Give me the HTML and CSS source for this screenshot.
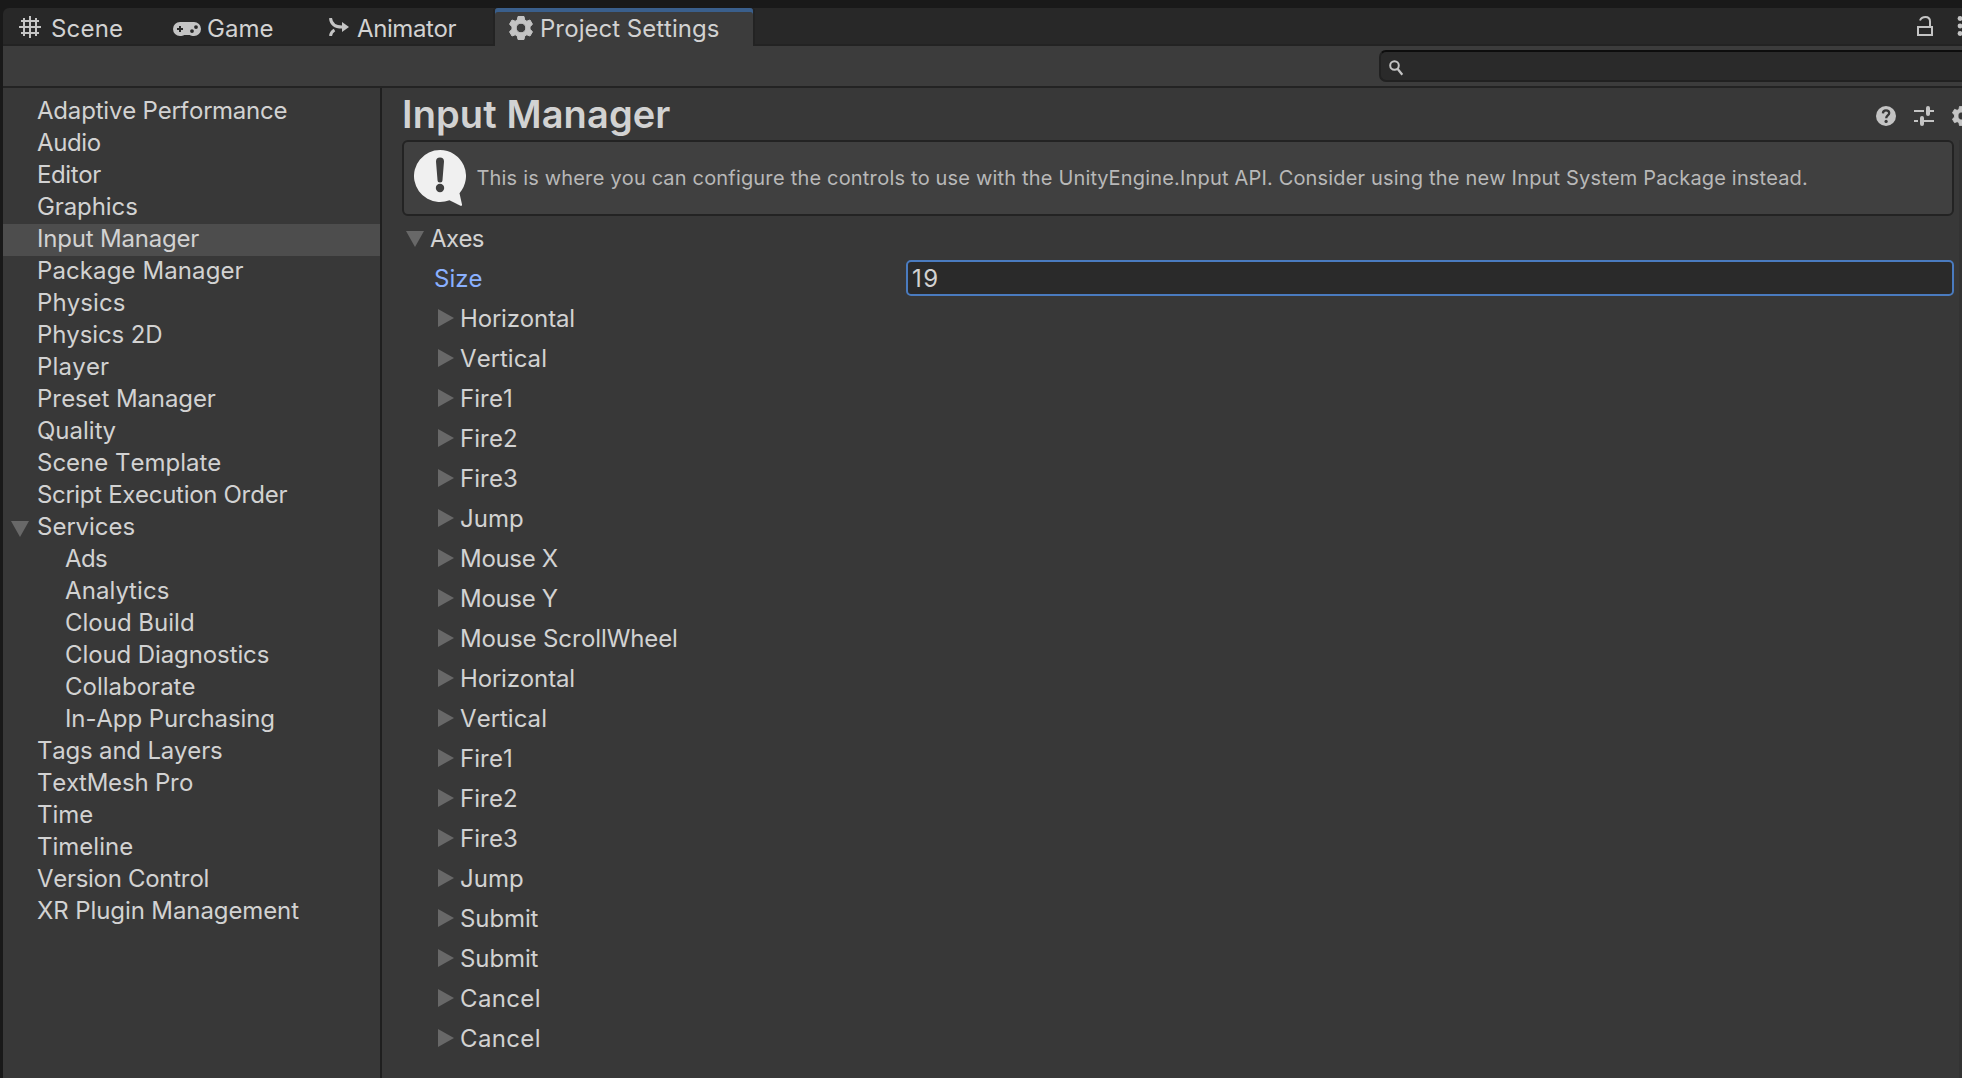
FILE: index.html
```html
<!DOCTYPE html>
<html lang="en">
<head>
<meta charset="utf-8">
<title>Project Settings</title>
<link rel="stylesheet" href="styles.css">
</head>
<body>
<svg class="defs" width="0" height="0" aria-hidden="true">
  <symbol id="gear" viewBox="0 0 24 24">
    <path stroke="currentColor" stroke-width="1" stroke-linejoin="round" fill-rule="evenodd" d="M9 0.500h6l.7 3.500 2.100 1.200 3.200-1.200 2.500 4.300-2.500 2.400v2.600l2.500 2.400-2.500 4.300-3.200-1.200-2.100 1.200-.7 3.500H9l-.7-3.500-2.100-1.200L3 20 .5 15.700 3 13.300v-2.600L.5 8.300 3 4l3.200 1.200L8.300 4zM12 7.200a4.800 4.800 0 1 0 0 9.600 4.800 4.800 0 0 0 0-9.600z"/>
  </symbol>
</svg>
<div class="window">
  <header class="tabs">
    <div class="tab tab-scene">
      <svg class="icon" width="22" height="22" viewBox="0 0 22 22"><path d="M5 2v18M11 0v22M17 2v18M2 5h18M0 11h22M2 17h18" fill="none" stroke="currentColor" stroke-width="2"/></svg>
      <span class="wide-2">Scene</span>
    </div>
    <div class="tab tab-game">
      <svg class="icon" width="28" height="14" viewBox="0 0 28 14"><path fill-rule="evenodd" d="M7 0h14a7 7 0 0 1 0 14c-2 0-3-.3-4.200-1h-5.600C10 13.700 9 14 7 14A7 7 0 0 1 7 0zM6 4v2H4v2h2v2h2V8h2V6H8V4zM23 3.200a1.900 1.900 0 1 0 0 3.800 1.900 1.900 0 0 0 0-3.800zM19 7.200a1.900 1.900 0 1 0 0 3.800 1.900 1.900 0 0 0 0-3.800z"/></svg>
      <span>Game</span>
    </div>
    <div class="tab tab-animator">
      <svg class="icon" width="20" height="18" viewBox="0 0 20 18"><path d="M1.500 0C2 5 5 9 13 9M1.500 18c.3-3 1.500-4.700 4-6" fill="none" stroke="currentColor" stroke-width="3"/><path d="M13 4l7 5-7 5z"/></svg>
      <span class="tight-4">Animator</span>
    </div>
    <div class="tab tab-active">
      <svg class="icon" width="24" height="24"><use href="#gear"/></svg>
      <span>Project Settings</span>
    </div>
    <div class="window-buttons">
      <svg class="icon" width="16" height="20" viewBox="0 0 16 20"><path d="M1 11h14v8H1zM3 4.500C4 2 6 1 8.500 1 11.500 1 13 3 13 5.500V11" fill="none" stroke="currentColor" stroke-width="2"/></svg>
      <svg class="icon" width="6" height="20" viewBox="0 0 6 20"><circle cx="3" cy="2.500" r="2.400"/><circle cx="3" cy="10" r="2.400"/><circle cx="3" cy="17.500" r="2.400"/></svg>
    </div>
  </header>
  <div class="toolbar">
    <div class="search">
      <svg class="icon" width="15" height="16" viewBox="0 0 15 16"><circle cx="5.500" cy="5.500" r="4.300" fill="none" stroke="currentColor" stroke-width="2"/><path d="M8.500 8.800l4.800 6" fill="none" stroke="currentColor" stroke-width="2.200"/></svg>
    </div>
  </div>
  <div class="body">
    <nav class="sidebar">
      <div class="item tight-2">Adaptive Performance</div>
      <div class="item tight-4">Audio</div>
      <div class="item tight-4">Editor</div>
      <div class="item tight-1">Graphics</div>
      <div class="item tight-2 selected">Input Manager</div>
      <div class="item wide-1">Package Manager</div>
      <div class="item wide-1">Physics</div>
      <div class="item tight-1">Physics 2D</div>
      <div class="item wide-2">Player</div>
      <div class="item tight-1">Preset Manager</div>
      <div class="item">Quality</div>
      <div class="item">Scene Template</div>
      <div class="item tight-3">Script Execution Order</div>
      <div class="item group"><svg class="fold" width="18" height="16" viewBox="0 0 18 16"><path d="M0 0h18L9 16z"/></svg>Services</div>
      <div class="item child tight-6">Ads</div>
      <div class="item child wide-1">Analytics</div>
      <div class="item child">Cloud Build</div>
      <div class="item child tight-1">Cloud Diagnostics</div>
      <div class="item child">Collaborate</div>
      <div class="item child tight-1">In-App Purchasing</div>
      <div class="item tight-2">Tags and Layers</div>
      <div class="item tight-2">TextMesh Pro</div>
      <div class="item">Time</div>
      <div class="item">Timeline</div>
      <div class="item tight-3">Version Control</div>
      <div class="item tight-1">XR Plugin Management</div>
    </nav>
    <main class="panel">
      <div class="heading">
        <h1>Input Manager</h1>
        <div class="heading-icons">
          <svg class="icon" width="20" height="20" viewBox="0 0 20 20"><circle cx="10" cy="10" r="10"/><path d="M6.900 7.400C7 5.300 8.200 4.300 10 4.300s3.200 1.100 3.200 2.800c0 2.300-3 2.500-3 5.100" fill="none" stroke="#383838" stroke-width="2.300"/><circle cx="10.100" cy="15.400" r="1.600" fill="#383838"/></svg>
          <svg class="icon" width="20" height="20" viewBox="0 0 20 20"><path d="M0 5h10M16 5h4M0 15h4M10 15h10" fill="none" stroke="currentColor" stroke-width="2"/><path d="M14 2v6M8 12v6" stroke="currentColor" stroke-width="4" stroke-linecap="round"/></svg>
          <svg class="icon" width="20" height="20"><use href="#gear"/></svg>
        </div>
      </div>
      <div class="content">
        <div class="fields">
          <div class="helpbox">
            <svg class="bubble" width="52" height="56" viewBox="0 0 52 56"><path d="M26 0a26 26 0 0 1 19.500 43.200L48 54.500c.2 1-.5 1.700-1.500 1.300L35.500 50.200A26 26 0 1 1 26 0z" fill="#f0f0f0"/><path d="M22 11.500a4 4 0 0 1 8 0L28.500 30a2.500 2.500 0 0 1-5 0z" fill="#404040"/><circle cx="26" cy="38" r="4.200" fill="#404040"/></svg>
            <p>This is where you can configure the controls to use with the UnityEngine.Input API. Consider using the new Input System Package instead.</p>
          </div>
          <div class="row axes tight-6"><svg class="fold" width="18" height="16" viewBox="0 0 18 16"><path d="M0 0h18L9 16z"/></svg>Axes</div>
          <div class="row size"><label>Size</label><div class="input">19</div></div>
          <div class="row entry tight-1"><i class="arrow"></i>Horizontal</div>
          <div class="row entry wide-1"><i class="arrow"></i>Vertical</div>
          <div class="row entry"><i class="arrow"></i>Fire1</div>
          <div class="row entry"><i class="arrow"></i>Fire2</div>
          <div class="row entry"><i class="arrow"></i>Fire3</div>
          <div class="row entry"><i class="arrow"></i>Jump</div>
          <div class="row entry tight-3"><i class="arrow"></i>Mouse X</div>
          <div class="row entry tight-3"><i class="arrow"></i>Mouse Y</div>
          <div class="row entry tight-1"><i class="arrow"></i>Mouse ScrollWheel</div>
          <div class="row entry tight-1"><i class="arrow"></i>Horizontal</div>
          <div class="row entry wide-1"><i class="arrow"></i>Vertical</div>
          <div class="row entry"><i class="arrow"></i>Fire1</div>
          <div class="row entry"><i class="arrow"></i>Fire2</div>
          <div class="row entry"><i class="arrow"></i>Fire3</div>
          <div class="row entry"><i class="arrow"></i>Jump</div>
          <div class="row entry tight-1"><i class="arrow"></i>Submit</div>
          <div class="row entry tight-1"><i class="arrow"></i>Submit</div>
          <div class="row entry wide-3"><i class="arrow"></i>Cancel</div>
          <div class="row entry wide-3"><i class="arrow"></i>Cancel</div>
        </div>
        <div class="scrollbar"></div>
      </div>
    </main>
  </div>
</div>
</body>
</html>
```
FILE: styles.css
```css
* { box-sizing: border-box; }
body {
  margin: 0;
  height: 1078px;
  overflow: hidden;
  background: #191919;
  color: #d2d2d2;
  font: 24px/29px Inter, "Liberation Sans", sans-serif;
  font-kerning: none;
  white-space: nowrap;
}
svg { flex: none; display: block; fill: currentColor; }
.defs { position: absolute; }
.icon { color: #c4c4c4; }

/* Tracking adjustments for labels */
.tight-1 { letter-spacing: -0.1px; }
.tight-2 { letter-spacing: -0.2px; }
.tight-3 { letter-spacing: -0.3px; }
.tight-4 { letter-spacing: -0.4px; }
.tight-6 { letter-spacing: -0.6px; }
.wide-1 { letter-spacing: 0.1px; }
.wide-2 { letter-spacing: 0.2px; }
.wide-3 { letter-spacing: 0.35px; }

.window {
  height: 1078px;
  padding: 8px 0 0 3px;
  display: flex;
  flex-direction: column;
}
.tabs {
  flex: none;
  height: 38px;
  display: flex;
  background: #282828;
  border-top-left-radius: 6px;
  box-shadow: inset 0 -2px #232323;
}
.tab {
  display: flex;
  align-items: center;
  height: 38px;
}
.tab span { margin-top: 3px; }
.tab-scene { width: 153px; padding-left: 16px; gap: 10px; }
.tab-game { width: 162px; padding-left: 17px; gap: 6px; }
.tab-game svg { margin-top: 4px; }
.tab-animator { width: 177px; padding-left: 11px; gap: 8px; }
.tab-active {
  width: 258px;
  padding-left: 14px;
  gap: 7px;
  background: #3c3c3c;
  border-radius: 3px 3px 0 0;
  box-shadow: inset 0 4px #3a5f8c, -2px 0 #232323, 2px 0 #232323;
}
.tab-active svg { margin-top: 2px; }
.window-buttons {
  margin-left: auto;
  padding-top: 8px;
  display: flex;
  gap: 24px;
  margin-right: -1px;
}
.toolbar {
  flex: none;
  height: 42px;
  padding-top: 4px;
  background: #3c3c3c;
  border-bottom: 2px solid #232323;
  display: flex;
  justify-content: flex-end;
}
.search {
  width: 583px;
  height: 32px;
  padding: 8px;
  background: #2a2a2a;
  border: 2px solid #212121;
  border-top-color: #0d0d0d;
  border-right: 0;
  border-radius: 7px 0 0 7px;
}
.body { flex: 1; min-height: 0; display: flex; background: #383838; }
.sidebar {
  flex: none;
  width: 379px;
  padding-top: 8px;
  border-right: 2px solid #1f1f1f;
}
.item { height: 32px; padding-left: 34px; }
.item.selected { background: #4d4d4d; }
.item.child { padding-left: 62px; }
.item.group { display: flex; padding-left: 8px; gap: 8px; }
.fold { color: #686868; margin-top: 9px; }
.panel { flex: 1; min-width: 0; display: flex; flex-direction: column; }
.heading {
  height: 52px;
  padding-left: 20px;
  display: flex;
  justify-content: space-between;
}
h1 { margin: 0; font-size: 38px; line-height: 52px; font-weight: 600; letter-spacing: 0.12px; }
.heading-icons { display: flex; gap: 18px; padding-top: 18px; margin-right: -10px; }
.content { flex: 1; min-height: 0; display: flex; }
.fields { flex: 1; padding-left: 20px; padding-right: 5px; }
.scrollbar { width: 3px; background: #333; }
.helpbox {
  height: 76px;
  padding-left: 10px;
  display: flex;
  gap: 10.5px;
  background: #404040;
  border: 2px solid #232323;
  border-radius: 6px;
}
.bubble { margin-top: 8px; }
.helpbox p {
  margin: 0;
  font-size: 20px;
  line-height: 72px;
  color: #b8b8b8;
  letter-spacing: 0.174px;
}
.row { height: 40px; line-height: 41px; display: flex; }
.axes { margin-top: 2px; padding-left: 4px; gap: 6px; }
.axes .fold { margin-top: 13px; }
.size { padding-left: 32px; justify-content: space-between; }
.size label { color: #8ab0ff; }
.size .input {
  width: 1048px;
  height: 36px;
  margin-top: 2px;
  padding-left: 4px;
  line-height: 33px;
  letter-spacing: 1.5px;
  background: #2a2a2a;
  border: 2px solid #4a7bbf;
  border-radius: 5px;
}
.entry { padding-left: 36px; gap: 6px; }
.arrow {
  height: 18px;
  margin-top: 11px;
  border: solid transparent;
  border-width: 9px 0 9px 16px;
  border-left-color: #686868;
}
```
